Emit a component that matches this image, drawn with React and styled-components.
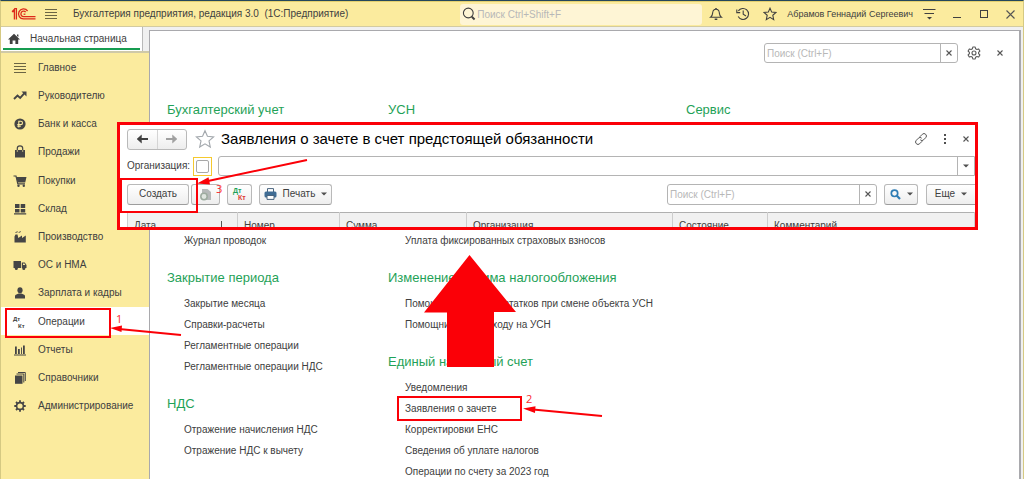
import React from "react";
import styled, { createGlobalStyle, css } from "styled-components";

const GlobalStyle = createGlobalStyle`
  *, *::before, *::after { box-sizing: border-box; }
  body {
    margin: 0;
    overflow: hidden;
    font-family: "Liberation Sans", Arial, sans-serif;
    font-size: 10px;
    line-height: 16px;
    color: #404040;
    background: #f0f0f0;
  }
  button, input { font: inherit; color: inherit; }
  svg { display: block; flex: none; }
`;

const Shell = styled.div`
  position: relative;
  display: flex;
  flex-direction: column;
  height: 100vh;
  overflow: hidden;
  border-top: 1px solid #24475c;
  border-left: 1px solid #d5c982;
  border-right: 1px solid #d5c982;
`;

/* ---------- title bar ---------- */
const TitleBar = styled.header`
  display: flex;
  align-items: center;
  height: 26px;
  flex: none;
  padding-left: 10px;
  background: #fbeb9e;
  border-top: 1px solid #e3cf6e;
  border-bottom: 1px solid #d3cba0;
`;

const IconButton = styled.button`
  display: flex;
  align-items: center;
  justify-content: center;
  flex: none;
  width: ${(p) => p.$w || 27}px;
  height: 20px;
  padding: 0;
  border: 0;
  background: none;
  color: #404040;
`;

const AppTitle = styled.h1`
  flex: 1;
  margin: 0 0 0 8px;
  font-size: 10px;
  font-weight: 400;
  white-space: pre;
  overflow: hidden;
`;

const GlobalSearch = styled.label`
  display: flex;
  align-items: center;
  flex: none;
  width: 242px;
  height: 21px;
  padding-left: 2px;
  gap: 1px;
  border-radius: 3px;
  background: #fef5d5;
`;

const BareInput = styled.input`
  flex: 1;
  min-width: 0;
  height: 100%;
  padding: 0;
  border: 0;
  outline: 0;
  background: none;
  font-size: 10px;
  &::placeholder { color: #b8b8b8; opacity: 1; }
`;

const UserName = styled.span`
  margin: 0 3px 0 4px;
  font-size: 9px;
  white-space: nowrap;
`;

/* ---------- body ---------- */
const Body = styled.div`
  display: flex;
  flex: 1;
  min-height: 0;
`;

const SideColumn = styled.aside`
  display: flex;
  flex-direction: column;
  flex: none;
  width: 148px;
  background: #fbeb9e;
`;

const TabStrip = styled.div`
  height: 26px;
  flex: none;
  padding-right: 6px;
  background: #f0f0f0;
  border-bottom: 2px solid #cfc9a8;
`;

const HomeTab = styled.button`
  display: flex;
  align-items: center;
  gap: 9px;
  width: 100%;
  height: 24px;
  padding: 0 2px 0 6px;
  border: 0;
  border-right: 1px solid #b9b9b9;
  background: linear-gradient(#169c50, #169c50) 2px 21px / 137px 2px no-repeat #fff;
  white-space: nowrap;
`;

const Nav = styled.nav`
  display: grid;
  grid-template-rows: repeat(13, 1fr);
  height: 367px;
  flex: none;
`;

const NavLink = styled.a`
  display: flex;
  align-items: center;
  gap: 10px;
  padding: 1px 0 0 11px;
  color: #404040;
  text-decoration: none;
  white-space: nowrap;
  ${(p) => p.$active && css`background: #fff;`}
`;

const Panel = styled.main`
  flex: 1;
  min-width: 0;
  margin: 3px 2px 0 0;
  padding: 12px 10px 0 17px;
  overflow: hidden;
  background: #fff;
  border: solid #a9a9ad;
  border-width: 1px 2px 0 1px;
`;

const PanelTools = styled.div`
  display: flex;
  justify-content: flex-end;
  align-items: center;
  height: 20px;
  margin-bottom: 37px;
`;

const SearchField = styled.div`
  display: flex;
  flex: none;
  width: ${(p) => p.$w}px;
  height: ${(p) => p.$h || 20}px;
  margin-right: ${(p) => p.$gap || 0}px;
  padding-left: 2px;
  border: 1px solid #b4b4b4;
  border-radius: 3px;
  background: #fff;
`;

const FieldButton = styled.button`
  display: flex;
  align-items: center;
  justify-content: center;
  flex: none;
  width: 17px;
  padding: 0;
  border: 0;
  border-left: 1px solid #b4b4b4;
  background: none;
  color: #4f4f4f;
`;

const Columns = styled.div`
  display: grid;
  grid-template-columns: 221px 298px 1fr;
`;

const Section = styled.section`
  margin-bottom: 17px;
`;

const SectionTitle = styled.h2`
  margin: 0 0 5px;
  font-size: 13px;
  line-height: 20px;
  font-weight: 400;
  color: #1fa258;
  white-space: nowrap;
`;

const LinkList = styled.ul`
  list-style: none;
  margin: 0;
  padding: ${(p) => (p.$covered ? 105 : 0)}px 0 0 17px;
`;

const LinkItem = styled.li`
  height: 21px;
  line-height: 21px;
  white-space: nowrap;
  a { color: #404040; text-decoration: none; }
`;

/* ---------- floating document window ---------- */
const FloatingWindow = styled.section`
  position: absolute;
  top: 121px;
  left: 116px;
  right: 45px;
  height: 108px;
  padding: 3px 0 0 7px;
  overflow: hidden;
  background: #fff;
  border: 3px solid #fb0007;
`;

const WindowHeader = styled.div`
  display: flex;
  align-items: center;
  height: 22px;
`;

const HistoryButtons = styled.div`
  display: flex;
  flex: none;
  width: 60px;
  height: 21px;
  margin-right: 8px;
  border: 1px solid #b9b9b9;
  border-radius: 3px;
  background: linear-gradient(#fff, #ededed);
  button { flex: 1; height: auto; }
  button + button { border-left: 1px solid #d4d4d4; color: #a0a0a0; }
`;

const WindowTitle = styled.h2`
  flex: 1;
  margin: 0 0 0 6px;
  font-size: 15px;
  line-height: 20px;
  font-weight: 400;
  color: #000;
  white-space: nowrap;
`;

const FilterRow = styled.div`
  display: flex;
  align-items: center;
  height: 20px;
  margin-top: 6px;
`;

const FilterLabel = styled.label`
  flex: none;
  width: 66px;
  white-space: nowrap;
`;

const CheckFrame = styled.span`
  display: flex;
  align-items: center;
  justify-content: center;
  flex: none;
  width: 19px;
  height: 19px;
  margin-right: 6px;
  border: 1px solid #f5c92e;
`;

const Check = styled.input`
  appearance: none;
  width: 13px;
  height: 13px;
  margin: 0;
  border: 1px solid #a8a8a8;
  border-radius: 2px;
  background: #fff;
`;

const ComboField = styled.div`
  display: flex;
  flex: 1;
  height: 20px;
  padding-left: 3px;
  border: 1px solid #b4b4b4;
  border-radius: 3px 0 0 3px;
`;

const CommandBar = styled.div`
  display: flex;
  align-items: center;
  height: 22px;
  margin-top: 7px;
`;

const CommandButton = styled.button`
  display: flex;
  align-items: center;
  justify-content: center;
  flex: none;
  gap: 6px;
  width: ${(p) => p.$w}px;
  height: 21px;
  margin-right: ${(p) => p.$gap || 0}px;
  padding: 0;
  border: 1px solid #b9b9b9;
  border-bottom-color: #9d9d9d;
  border-radius: 3px;
  background: linear-gradient(#fff, #eee);
  ${(p) => p.$edge && css`border-right: 0; border-radius: 3px 0 0 3px;`}
`;

const Spacer = styled.span`
  flex: 1;
`;

const Table = styled.table`
  width: 100%;
  margin-top: 7px;
  table-layout: fixed;
  border-collapse: collapse;
  background: #f1f1f1;
  th {
    height: 26px;
    padding: 0 6px;
    border: 1px solid #cdcdcd;
    border-top-color: #b0b0b0;
    font-weight: 400;
    text-align: left;
    white-space: nowrap;
  }
`;

const Col = styled.col`
  width: ${(p) => (p.$w ? `${p.$w}px` : "auto")};
`;

const SortHead = styled.span`
  display: flex;
  align-items: center;
  justify-content: space-between;
  padding-right: 7px;
`;

/* ---------- annotations ---------- */
const Frame = styled.div`
  position: absolute;
  left: ${(p) => p.$x}px;
  top: ${(p) => p.$y}px;
  width: ${(p) => p.$w}px;
  height: ${(p) => p.$h}px;
  border: 2px solid #fb0007;
  pointer-events: none;
`;

const StepNumber = styled.span`
  position: absolute;
  left: ${(p) => p.$x}px;
  top: ${(p) => p.$y}px;
  font-family: "Open Sans", sans-serif;
  font-size: 11px;
  line-height: 12px;
  color: #fb2a30;
`;

const Arrows = styled.svg`
  position: absolute;
  top: 0;
  left: 0;
  pointer-events: none;
`;

/* ---------- icons ---------- */
const Svg = ({ w = 16, h = 16, children, ...rest }) => (
  <svg width={w} height={h} viewBox={`0 0 ${w} ${h}`} fill="none" aria-hidden="true" {...rest}>
    {children}
  </svg>
);

const Logo = () => (
  <Svg w={25} h={14} stroke="#dd2a1b" strokeWidth="1.3">
    <path d="M1 4.6 3.4 2.2V12.4M1 4.6H3.2M3.2 1.6H5.4V12.4" />
    <path d="M16.6 4A5 5 0 1 0 12.6 11.9H24.5" />
    <path d="M14.7 5.2A2.7 2.7 0 1 0 12.6 9.6H24.5" />
    <path d="M12.6 7.2h1.8" />
  </Svg>
);
const Lines = () => (
  <Svg w={12} h={12} stroke="#6b6544">
    <path d="M0 1.5H12M0 4.5H12M0 7.5H12M0 10.5H12" />
  </Svg>
);
const SearchIcon = () => (
  <Svg w={14} h={14} stroke="#404040">
    <circle cx="6.3" cy="6" r="4.9" strokeWidth="1.1" />
    <path d="M9.8 9.8 12.6 12.4" strokeWidth="2" />
  </Svg>
);
const Bell = () => (
  <Svg w={14} h={14} stroke="#404040" strokeWidth="1.1">
    <path d="M1.6 10.3C3.6 8.8 3.5 7.4 3.7 5.5 4 3.3 5.2 2.2 7 2.2s3 1.1 3.3 3.3c.2 1.9.1 3.3 2.1 4.8Z" />
    <path d="M7 1v1.2M5.7 12.2h2.6" strokeWidth="1.5" />
  </Svg>
);
const History = () => (
  <Svg w={14} h={14} stroke="#404040" strokeWidth="1.1">
    <path d="M2.4 4A5.5 5.5 0 1 1 2.2 9.6" />
    <path d="M.8 2.4V5.6H4.2" />
    <path d="M7.2 3.6V7.2L10 9" />
  </Svg>
);
const Star = ({ size = 14, color = "#404040" }) => (
  <svg width={size} height={size} viewBox="0 0 14 14" fill="none" stroke={color} strokeWidth={size > 14 ? 0.8 : 1.1} aria-hidden="true">
    <path d="M7 1.2 8.7 5.1 13 5.5 9.8 8.3 10.7 12.6 7 10.4 3.3 12.6 4.2 8.3 1 5.5 5.3 5.1Z" />
  </svg>
);
const Settings = () => (
  <Svg w={13} h={12} stroke="#404040">
    <path d="M0 1.5H12.5M1.5 5.5H11" />
    <path d="M4 9h5L6.5 11.4Z" fill="#404040" stroke="none" />
  </Svg>
);
const Minimize = () => (
  <Svg w={10} h={10} stroke="#404040"><path d="M1 8.5H9" /></Svg>
);
const Maximize = () => (
  <Svg w={10} h={10} stroke="#404040"><rect x="1.5" y="1.5" width="7" height="7" /></Svg>
);
const Cross = ({ s = 6, sw = 1.1 }) => (
  <Svg w={s} h={s} stroke="#555" strokeWidth={sw}>
    <path d={`M.5.5 ${s - 0.5} ${s - 0.5}M${s - 0.5}.5.5 ${s - 0.5}`} />
  </Svg>
);
const Gear = () => (
  <Svg w={14} h={14} stroke="#5a5a5a" strokeWidth="1.1" strokeLinejoin="round">
    <path d="M5.8 1h2.4l.4 1.8 1.3.7 1.8-.6 1.2 2.1L11.6 6.3v1.4l1.3 1.3-1.2 2.1-1.8-.6-1.3.7L8.2 13H5.8l-.4-1.8-1.3-.7-1.8.6L1.1 9l1.3-1.3V6.3L1.1 5l1.2-2.1 1.8.6 1.3-.7Z" />
    <circle cx="7" cy="7" r="2" />
  </Svg>
);
const Home = () => (
  <Svg w={14} h={12}>
    <path fill="#404040" d="M7 .8 13 6.6H11.2V11H8.4V7.4H5.6V11H2.8V6.6H1Z" />
    <path fill="#404040" d="M10 1.5h1.4v2.5L10 3Z" />
  </Svg>
);
const Caret = () => (
  <Svg w={6} h={4}><path d="M0 .5H6L3 3.5Z" fill="#4f4f4f" /></Svg>
);
const ArrowIcon = ({ back }) => (
  <Svg w={13} h={10} stroke="currentColor" strokeWidth="2">
    <path d={back ? "M12 5H3" : "M1 5H10"} />
    <path d={back ? "M1 5 5.5 1V3.5L4.5 5 5.5 6.5V9Z" : "M12 5 7.5 1V3.5L8.5 5 7.5 6.5V9Z"} fill="currentColor" strokeWidth=".5" />
  </Svg>
);
const LinkIcon = () => (
  <Svg w={14} h={14} stroke="#555">
    <path d="M5.8 4.8 8.3 2.3a2.3 2.3 0 0 1 3.4 3.4L9.6 7.8a2.3 2.3 0 0 1-3.3 0" />
    <path d="M8.2 9.2 5.7 11.7a2.3 2.3 0 0 1-3.4-3.4L4.4 6.2a2.3 2.3 0 0 1 3.3 0" />
  </Svg>
);
const Dots = () => (
  <Svg w={4} h={12}>
    <path d="M1 1H3V3H1ZM1 5H3V7H1ZM1 9H3V11H1Z" fill="#4f4f4f" />
  </Svg>
);
const Printer = () => (
  <Svg w={13} h={12}>
    <path d="M3.5 4V.6H9.5V4" stroke="#49647e" fill="#fff" />
    <rect x=".5" y="3.5" width="12" height="6" rx="1.5" fill="#3f6c94" />
    <path d="M3 7.5H10V11.4H3Z" fill="#fff" stroke="#49647e" />
  </Svg>
);
const CopyIcon = () => (
  <Svg w={13} h={13}>
    <path d="M3 1H8.5L12 4V12H3Z" fill="#b6b9b9" />
    <circle cx="5" cy="8.5" r="3.2" fill="#dfe5df" stroke="#9dab9f" strokeWidth="1.5" />
  </Svg>
);
const DtKt = ({ dt = "#404040", kt = "#404040", size = 7 }) => (
  <svg width="16" height="16" viewBox="0 0 16 16" aria-hidden="true" fontFamily="Liberation Sans, sans-serif" fontWeight="700" fontSize={size}>
    <text x="1" y="7" fill={dt}>Дт</text>
    <text x="6" y="14" fill={kt}>Кт</text>
  </svg>
);
const Magnifier = () => (
  <Svg w={11} h={11} stroke="#2f7db5">
    <circle cx="4.5" cy="4.3" r="3.2" strokeWidth="1.7" />
    <path d="M6.9 6.8 10 10" strokeWidth="2.2" />
  </Svg>
);

const C = "#454545";
const navIcons = {
  main: <Svg stroke="#6b6544"><path d="M2 3.5H14M2 6.5H14M2 9.5H14M2 12.5H14" /></Svg>,
  chief: (
    <Svg>
      <path d="M2 11 5.5 7.5 8.2 10 12.5 5.2" stroke={C} strokeWidth="1.9" />
      <path d="M9.5 3.5H14.5V8.5Z" fill={C} />
    </Svg>
  ),
  bank: (
    <Svg>
      <circle cx="8" cy="8" r="5.6" fill={C} />
      <path d="M6.8 11.5V5.2H8.8a1.7 1.7 0 0 1 0 3.4H5.3M5.3 10.2H8.8" stroke="#fbeb9e" strokeWidth="1.1" />
    </Svg>
  ),
  sales: (
    <Svg>
      <path d="M3 6H13V13.5H3Z" fill={C} />
      <path d="M5.3 8V4.2a2.7 2.3 0 0 1 5.4 0V8" stroke={C} strokeWidth="1.2" />
      <path d="M5.3 6.2V7.8M10.7 6.2V7.8" stroke="#fbeb9e" strokeWidth=".8" />
    </Svg>
  ),
  buy: (
    <Svg>
      <path d="M1.5 3H4L5.8 10.8H13" stroke={C} strokeWidth="1.2" />
      <path d="M4.3 4H14.5L13.2 9.5H5.5Z" fill={C} />
      <circle cx="6.5" cy="12.7" r="1.2" fill={C} />
      <circle cx="11.8" cy="12.7" r="1.2" fill={C} />
    </Svg>
  ),
  store: (
    <Svg>
      <path fill={C} d="M3 3H7.5V7H3ZM8.7 3H13.2V7H8.7ZM3 8H7.5V11.5H3ZM8.7 8H13.2V11.5H8.7ZM2 12.3H14.2V13.5H2Z" />
    </Svg>
  ),
  factory: (
    <Svg>
      <path fill={C} d="M2.5 13.5V7.5L3.5 5.5H5.5L6.3 9 10 6.5V9L13.8 6.5V13.5Z" />
      <path stroke={C} d="M3.5 3.8C4 2.5 5 3.8 5.7 2.6M6.8 3.8C7.3 2.5 8 3.5 8.8 2.4" />
    </Svg>
  ),
  truck: (
    <Svg>
      <path fill={C} d="M1.5 4H9V11H1.5ZM9.8 5.5H12.8L14.5 8V11H9.8Z" />
      <path fill="#fbeb9e" d="M11 6.5H12.5L13.3 8H11Z" />
      <circle cx="4.3" cy="11.5" r="1.5" fill={C} />
      <circle cx="11.8" cy="11.5" r="1.5" fill={C} />
    </Svg>
  ),
  person: (
    <Svg>
      <ellipse cx="8" cy="5.3" rx="2.6" ry="3" fill={C} />
      <path fill={C} d="M3 13.5V11C3 9.5 5.5 9.3 6.5 8.5H9.5C10.5 9.3 13 9.5 13 11V13.5Z" />
    </Svg>
  ),
  ops: <DtKt size={6} />,
  reports: (
    <Svg>
      <path fill={C} d="M3 4.5H4.8V12H3ZM6 7H7.8V12H6ZM9 5.5H9.9V12H9ZM11 3.5H12.8V12H11ZM2 12.5H14V13.5H2Z" />
    </Svg>
  ),
  books: (
    <Svg>
      <path fill={C} d="M3 5.5H10.5V13.8H3Z" />
      <path stroke={C} d="M4.5 4H11.8V12.5M6 2.5H13.3V11" />
    </Svg>
  ),
  admin: (
    <Svg stroke={C}>
      <circle cx="8" cy="8" r="3.4" strokeWidth="1.6" />
      <path strokeWidth="1.8" d="M8 2.3V4.5M8 11.5V13.7M2.3 8H4.5M11.5 8H13.7M4 4 5.5 5.5M10.5 10.5 12 12M12 4 10.5 5.5M5.5 10.5 4 12" />
    </Svg>
  ),
};

const navItems = [
  ["main", "Главное"],
  ["chief", "Руководителю"],
  ["bank", "Банк и касса"],
  ["sales", "Продажи"],
  ["buy", "Покупки"],
  ["store", "Склад"],
  ["factory", "Производство"],
  ["truck", "ОС и НМА"],
  ["person", "Зарплата и кадры"],
  ["ops", "Операции"],
  ["reports", "Отчеты"],
  ["books", "Справочники"],
  ["admin", "Администрирование"],
];

const columns = [
  [
    { title: "Бухгалтерский учет", covered: true, links: ["Журнал проводок"] },
    {
      title: "Закрытие периода",
      links: ["Закрытие месяца", "Справки-расчеты", "Регламентные операции", "Регламентные операции НДС"],
    },
    { title: "НДС", links: ["Отражение начисления НДС", "Отражение НДС к вычету"] },
  ],
  [
    { title: "УСН", covered: true, links: ["Уплата фиксированных страховых взносов"] },
    {
      title: "Изменение режима налогообложения",
      links: ["Помощник по учету остатков при смене объекта УСН", "Помощник по переходу на УСН"],
    },
    {
      title: "Единый налоговый счет",
      links: [
        "Уведомления",
        "Заявления о зачете",
        "Корректировки ЕНС",
        "Сведения об уплате налогов",
        "Операции по счету за 2023 год",
      ],
    },
  ],
  [{ title: "Сервис", links: [] }],
];

export default function App() {
  return (
    <Shell>
      <GlobalStyle />
      <TitleBar>
        <Logo />
        <IconButton $w={29} aria-label="Меню"><Lines /></IconButton>
        <AppTitle>{"Бухгалтерия предприятия, редакция 3.0  (1С:Предприятие)"}</AppTitle>
        <GlobalSearch>
          <SearchIcon />
          <BareInput aria-label="Поиск" placeholder="Поиск Ctrl+Shift+F" />
        </GlobalSearch>
        <IconButton aria-label="Уведомления"><Bell /></IconButton>
        <IconButton aria-label="История"><History /></IconButton>
        <IconButton aria-label="Избранное"><Star /></IconButton>
        <UserName>Абрамов Геннадий Сергеевич</UserName>
        <IconButton aria-label="Настройки"><Settings /></IconButton>
        <IconButton aria-label="Свернуть"><Minimize /></IconButton>
        <IconButton aria-label="Развернуть"><Maximize /></IconButton>
        <IconButton $w={26} aria-label="Закрыть"><Cross s={9} /></IconButton>
      </TitleBar>

      <Body>
        <SideColumn>
          <TabStrip>
            <HomeTab><Home />Начальная страница</HomeTab>
          </TabStrip>
          <Nav>
            {navItems.map(([id, label]) => (
              <NavLink key={id} href="#" $active={id === "ops"}>
                {navIcons[id]}
                {label}
              </NavLink>
            ))}
          </Nav>
        </SideColumn>

        <Panel>
          <PanelTools>
            <SearchField $w={194}>
              <BareInput aria-label="Поиск в разделе" placeholder="Поиск (Ctrl+F)" />
              <FieldButton aria-label="Очистить"><Cross /></FieldButton>
            </SearchField>
            <IconButton $w={32} aria-label="Настройка"><Gear /></IconButton>
            <IconButton $w={19} aria-label="Закрыть раздел"><Cross /></IconButton>
          </PanelTools>
          <Columns>
            {columns.map((sections, i) => (
              <div key={i}>
                {sections.map((s) => (
                  <Section key={s.title}>
                    <SectionTitle>{s.title}</SectionTitle>
                    {s.links.length > 0 && (
                      <LinkList $covered={s.covered}>
                        {s.links.map((l) => (
                          <LinkItem key={l}><a href="#">{l}</a></LinkItem>
                        ))}
                      </LinkList>
                    )}
                  </Section>
                ))}
              </div>
            ))}
          </Columns>
        </Panel>
      </Body>

      <FloatingWindow>
        <WindowHeader>
          <HistoryButtons>
            <IconButton aria-label="Назад"><ArrowIcon back /></IconButton>
            <IconButton aria-label="Вперед"><ArrowIcon /></IconButton>
          </HistoryButtons>
          <Star size={20} color="#a3a8ad" />
          <WindowTitle>Заявления о зачете в счет предстоящей обязанности</WindowTitle>
          <IconButton $w={24} aria-label="Ссылка"><LinkIcon /></IconButton>
          <IconButton $w={24} aria-label="Еще действия"><Dots /></IconButton>
          <IconButton $w={18} aria-label="Закрыть окно"><Cross /></IconButton>
        </WindowHeader>
        <FilterRow>
          <FilterLabel htmlFor="org">Организация:</FilterLabel>
          <CheckFrame><Check type="checkbox" aria-label="Отбор по организации" /></CheckFrame>
          <ComboField>
            <BareInput id="org" />
            <FieldButton aria-label="Выбрать"><Caret /></FieldButton>
          </ComboField>
        </FilterRow>
        <CommandBar>
          <CommandButton $w={62} $gap={2}>Создать</CommandButton>
          <CommandButton $w={29} $gap={7} aria-label="Скопировать"><CopyIcon /></CommandButton>
          <CommandButton $w={25} $gap={7} aria-label="Дт Кт">
            <DtKt dt="#1fa258" kt="#dd3b34" />
          </CommandButton>
          <CommandButton $w={73}><Printer />Печать<Caret /></CommandButton>
          <Spacer />
          <SearchField $w={210} $h={21} $gap={7}>
            <BareInput aria-label="Поиск в списке" placeholder="Поиск (Ctrl+F)" />
            <FieldButton aria-label="Очистить поиск"><Cross /></FieldButton>
          </SearchField>
          <CommandButton $w={34} $gap={8} aria-label="Найти"><Magnifier /><Caret /></CommandButton>
          <CommandButton $w={49} $edge>Еще<Caret /></CommandButton>
        </CommandBar>
        <Table>
          <colgroup>
            <Col $w={110} /><Col $w={102} /><Col $w={127} /><Col $w={206} /><Col $w={95} /><Col />
          </colgroup>
          <thead>
            <tr>
              <th scope="col">
                <SortHead>
                  Дата
                  <Svg w={5} h={10} stroke="#555"><path d="M2.5 0V9M.5 7l2 2 2-2" /></Svg>
                </SortHead>
              </th>
              <th scope="col">Номер</th>
              <th scope="col">Сумма</th>
              <th scope="col">Организация</th>
              <th scope="col">Состояние</th>
              <th scope="col">Комментарий</th>
            </tr>
          </thead>
        </Table>
      </FloatingWindow>

      <Frame $x={4} $y={307} $w={106} $h={30} />
      <Frame $x={396} $y={395} $w={125} $h={25} />
      <Frame $x={119} $y={177} $w={78} $h={35} />
      <StepNumber $x={115} $y={312}>1</StepNumber>
      <StepNumber $x={525} $y={392}>2</StepNumber>
      <StepNumber $x={215} $y={182}>3</StepNumber>
      <Arrows width="620" height="440" viewBox="1 1 620 440" fill="#fb0007" stroke="#fb0007" aria-hidden="true">
        <path stroke="none" d="M469.5 255 516 312H494V367H447V312.5H424Z" />
        <path strokeWidth="2" d="M119 329 181 335M533 409.5 602 416M208 181 307 160" />
        <path stroke="none" d="M110 328 122 325.5 121.5 332ZM523 408.5 535.5 406.3 535 413ZM197 183.5 208.5 177.3 210 184.5Z" />
      </Arrows>
    </Shell>
  );
}
